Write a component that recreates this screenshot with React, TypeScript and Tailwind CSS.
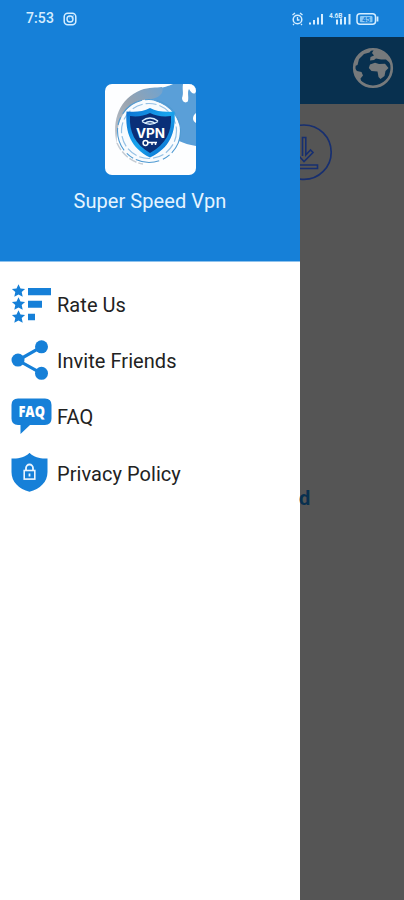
import type { ReactNode } from "react";

const BLUE = "#1680d8";

function AppLogo() {
  return (
    <svg width="91" height="91" viewBox="0 0 91 91">
      <defs>
        <clipPath id="logo-clip">
          <rect width="91" height="91" rx="7" />
        </clipPath>
        <linearGradient id="shield-rim" x1="0" y1="0" x2="1" y2="1">
          <stop offset="0" stopColor="#0d6fd0" />
          <stop offset="0.5" stopColor="#18a5ee" />
          <stop offset="1" stopColor="#0a63c8" />
        </linearGradient>
        <linearGradient id="swoosh" x1="0" y1="1" x2="1" y2="0">
          <stop offset="0" stopColor="#c3c9d0" />
          <stop offset="0.5" stopColor="#98a3af" />
          <stop offset="1" stopColor="#6fa3d0" />
        </linearGradient>
      </defs>
      <g clipPath="url(#logo-clip)">
        <rect width="91" height="91" fill="#fdfeff" />
        <circle cx="44" cy="47" r="32" fill="#f8fbfe" />
        <path d="M48 4C57 5 63 2 68 0H91V62C84 61 79 59 74 57C79 38 68 22 44 15C46 12 52 9 48 4Z" fill="#5a9fd8" />
        <path d="M12 60C6 36 15 14 36 6C44 3 51 4 57 3C60 10 52 15 43 15.500C24 16 10 34 12 60Z" fill="url(#swoosh)" />
        <path d="M78 0H91V7C90 12 86 9 84 5C82 8 84 13 83 17C81 20 77 18 77 14C79 9 77 6 78 0ZM91 29C87 32 87 37 91 39Z" fill="#fff" />
        <circle cx="44" cy="47" r="30" fill="#f8fbfe" />
        <circle cx="44" cy="47" r="31.5" fill="none" stroke="#4f9ad2" strokeWidth="1.100" strokeDasharray="24 3 8 4" />
        <circle cx="44" cy="47" r="27.5" fill="none" stroke="#95c1e5" strokeWidth="1.200" strokeDasharray="11 3" />
        <path d="M12 59C17 70 26 78 38 80" fill="none" stroke="#c5ccd4" strokeWidth="1.500" strokeDasharray="8 2" />
        <path d="M45 24C52 28 60 28 69.500 27.500C71 49 65 64 45 73.500C26 64 20 49 21.500 27.500C30 28 38 28 45 24Z" fill="url(#shield-rim)" />
        <path d="M45 29C51 32 58 33 66 32C67 48 61 60 45 69C30 60 24 48 25 32C32 33 39 32 45 29Z" fill="#0a2f78" />
        <path d="M37 37Q45 31 53 37M39.500 39.500Q45 35.500 50.500 39.500M37 37.500Q45 43 53 37.500" fill="none" stroke="#d9efff" strokeWidth="1.400" />
        <text x="45.500" y="53.500" textAnchor="middle" textLength="29" lengthAdjust="spacingAndGlyphs" fontFamily="Inter, sans-serif" fontSize="13" fontWeight="700" fill="#fff">
          VPN
        </text>
        <circle cx="40.500" cy="59" r="2.400" fill="none" stroke="#fff" strokeWidth="1.500" />
        <path d="M43 58.500H52M47 59V61M50.500 59V61" stroke="#fff" strokeWidth="1.500" />
      </g>
    </svg>
  );
}

function RateIcon() {
  return (
    <svg width="42" height="42" viewBox="0 0.700 42 42" fill={BLUE}>
      {[7.5, 20.5, 33.5].map((y) => (
        <path
          key={y}
          transform={`translate(8.500 ${y})`}
          d="M0-6.500L2-2.400L6.600-1.900L3.200 1.300L4.200 6L0 3.600L-4.200 6L-3.200 1.300L-6.600-1.900L-2-2.400Z"
        />
      ))}
      <path d="M18 4.800H41V12H18ZM18 17.500H32V24.500H18ZM18 30.500H25V37H18Z" />
    </svg>
  );
}

function ShareIcon() {
  return (
    <svg width="42" height="42" viewBox="0 0.700 42 42" fill={BLUE}>
      <path d="M31.500 7.500L8 21L31.500 34" fill="none" stroke={BLUE} strokeWidth="3.200" />
      <circle cx="31.500" cy="7.500" r="6.500" />
      <circle cx="8" cy="20.800" r="6.500" />
      <circle cx="31.500" cy="34" r="6.500" />
    </svg>
  );
}

function FaqIcon() {
  return (
    <svg width="42" height="42" viewBox="0 0 42 42">
      <path d="M8 2.500H35Q41.500 2.500 41.500 9V22.500Q41.500 29 35 29H20L10.500 38V29H8Q1.500 29 1.500 22.500V9Q1.500 2.500 8 2.500Z" fill={BLUE} />
      <text x="21.700" y="21" textAnchor="middle" textLength="26.500" fontFamily="'Open Sans', sans-serif" fontSize="15" fontWeight="800" fill="#fff" lengthAdjust="spacingAndGlyphs">
        FAQ
      </text>
    </svg>
  );
}

function PrivacyIcon() {
  return (
    <svg width="42" height="42" viewBox="0 1 42 42">
      <path d="M19.500 .8C24 5.500 31 7 37.500 6.500V20C37.500 30 30 37 19.500 39.800C9 37 1.500 30 1.500 20V6.500C8 7 15 5.500 19.500 .8Z" fill={BLUE} />
      <rect x="14.200" y="18.500" width="10.600" height="8.600" fill="none" stroke="#eaf5ff" strokeWidth="1.600" />
      <path d="M16 18.500V16a3.500 3.500 0 0 1 7 0V18.500M19.500 21.500V24.500" fill="none" stroke="#eaf5ff" strokeWidth="1.800" />
    </svg>
  );
}

function StatusBar() {
  return (
    <div className="flex h-[37px] items-center justify-between bg-[#1680d8] pr-[24px] pl-[26px] text-[#d5edff]">
      <div className="flex items-center gap-[9px]">
        <span className="w-[28px] text-[14px] font-medium tracking-[0.1px]">7:53</span>
        <svg width="14" height="14" viewBox="0 0 14 14" fill="none" stroke="currentColor">
          <rect x="1.200" y="1.200" width="11.600" height="11.600" rx="3.500" strokeWidth="1.500" />
          <circle cx="7" cy="7" r="3" strokeWidth="1.400" />
          <path d="M6 6H6.500M8 6H8.500M9.800 3.800H10.500" strokeWidth="1.200" />
        </svg>
      </div>
      <div className="flex items-center">
        <svg width="88" height="16" viewBox="0 0 88 16" fill="none" stroke="currentColor">
          <circle cx="5.500" cy="8.500" r="4.300" strokeWidth="1.500" />
          <path d="M5.500 6V9H7.500M.5 4L3 2M8 2L10.500 4M2 13L1 14M9 13L10 14" strokeWidth="1.300" />
          <path d="M18 11.500V13.500M22 9V13.500M26 6.500V13.500M30 3V13.500" strokeWidth="2" />
          <path d="M45 8.500V13.500M49 7.500V13.500M53 6V13.500M57.500 3V13.500" strokeWidth="2" />
          <text x="37" y="7" fontSize="6.500" fontWeight="700" fill="currentColor" stroke="none">4.6B</text>
          <rect x="65" y="2.700" width="18.500" height="10.600" rx="3" strokeWidth="1.500" />
          <path d="M85.500 5.500V10.500" strokeWidth="1.800" />
          <rect x="68" y="5" width="12.500" height="6.200" rx="1" fill="#8ac8f5" stroke="none" />
          <text x="74.200" y="10.700" textAnchor="middle" fontSize="7" fontWeight="700" fill="#1680d8" stroke="none">45</text>
        </svg>
      </div>
    </div>
  );
}

interface MenuItemProps {
  icon: ReactNode;
  label: string;
}

function MenuItem({ icon, label }: MenuItemProps) {
  return (
    <li className="flex h-[56.25px] items-center gap-[5px] pl-[10px]">
      {icon}
      <span className="text-[20px] leading-6 tracking-[0.05px] whitespace-nowrap text-[#222]">{label}</span>
    </li>
  );
}

function Drawer() {
  return (
    <aside className="flex w-[300px] shrink-0 flex-col bg-white">
      <header className="flex h-[225px] flex-col items-center border-b border-[#8ec2ed] bg-[#1680d8] pt-[47px]">
        <AppLogo />
        <h1 className="mt-[14px] text-[20px] leading-6 tracking-[0.05px] whitespace-nowrap text-[#e5f4ff]">Super Speed Vpn</h1>
      </header>
      <ul className="pt-[14.700px]">
        <MenuItem icon={<RateIcon />} label="Rate Us" />
        <MenuItem icon={<ShareIcon />} label="Invite Friends" />
        <MenuItem icon={<FaqIcon />} label="FAQ" />
        <MenuItem icon={<PrivacyIcon />} label="Privacy Policy" />
      </ul>
    </aside>
  );
}

// The dimmed home screen that stays visible beside the open drawer.
function Backdrop() {
  return (
    <main className="flex min-w-0 flex-1 flex-col bg-[#555]">
      <div className="flex h-[67px] items-center justify-end bg-[#08304f] pr-[10px]">
        <svg className="-mt-[5px]" width="42" height="42" viewBox="0 0 42 42" fill="#777a7c">
          <circle cx="21" cy="21" r="18.800" fill="none" stroke="#777a7c" strokeWidth="2.600" />
          <path d="M2.500 21L5 24L9.500 25L11 28.500L8.500 31.500L9.500 36C5 33 2.500 28 2.500 21ZM3 19C4 11 11 3 20 2.500L17.500 5.500L12 7L7 12L5.500 18Z" />
          <path d="M22 2.500L20 6L22 8.500L18.500 10L18 13.500L22 13L24 11.500L29 12.500L34 12.500L38 16C37 8 30 3 22 2.500Z" />
          <path d="M18 17.500L23 15.800L27 17L33 16.800L36.500 21L33.500 24L32.500 29L28.500 32L26.500 30L25.500 24.500L19.500 24L16.800 21Z" />
        </svg>
      </div>
      <svg className="mt-[20px]" width="33" height="57" viewBox="300 124 33 57" fill="none" stroke="#172f70">
        <circle cx="304" cy="152.200" r="27.200" strokeWidth="1.700" />
        <path d="M302.500 156V137.500H305.800V155L310.500 150L313 152.500L304 161.500L298 155M298 165H317.500V168.500H298" strokeWidth="1.600" />
      </svg>
      <div className="mt-[305px] text-[20px] leading-6 font-bold text-[#08304f]">
        <span className="inline-block -translate-x-[1px]">d</span>
      </div>
    </main>
  );
}

export default function App() {
  return (
    <div className="flex h-[900px] w-[404px] flex-col overflow-hidden font-[Roboto,sans-serif]">
      <StatusBar />
      <div className="flex min-h-0 flex-1">
        <Drawer />
        <Backdrop />
      </div>
    </div>
  );
}
